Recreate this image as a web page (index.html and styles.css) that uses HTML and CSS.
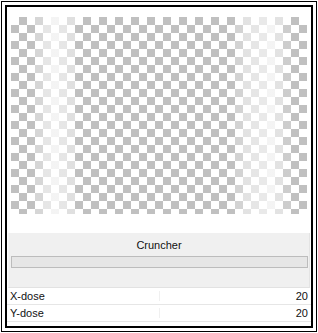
FILE: index.html
```html
<!DOCTYPE html>
<html lang="en">
  <head>
    <meta charset="UTF-8" />
    <title>Cruncher</title>
    <link rel="stylesheet" href="styles.css">
  </head>
  <body>
    <div class="frame">
      <div class="window">
        <div class="preview">
          <div class="checker"></div>
        </div>
        <div class="panel">
          <div class="panel-title">Cruncher</div>
          <div class="progress"></div>
        </div>
        <div class="params">
          <div class="row">
            <span class="name">X-dose</span>
            <span class="sep"></span>
            <span class="value">20</span>
          </div>
          <div class="row">
            <span class="name">Y-dose</span>
            <span class="sep"></span>
            <span class="value">20</span>
          </div>
        </div>
      </div>
    </div>
  </body>
</html>
```
FILE: styles.css
```css
body{
  margin: 0;
  background: #fff;
  font-family: "Liberation Sans", Arial, sans-serif;
  font-size: 11px;
  color: #111;
}
.frame{
  margin: 1px;
  width: 308px;
  height: 323px;
  padding: 3px;
  border: 1px solid #000;
}
.window{
  height: 319px;
  border: 2px solid #000;
  background: #fff;
  display: flex;
  flex-direction: column;
}
.preview{
  height: 226px;
  padding: 10px 0 0 4px;
  box-sizing: border-box;
}
/* checker with faded columns, one step per 8px column */
.checker{
  width: 296px;
  height: 197px;
  background-color: #fff;
  background-image:
    linear-gradient(to right,
      rgba(255,255,255,0) 24px,
      rgba(255,255,255,0.35) 24px 32px,
      rgba(255,255,255,0.6) 32px 40px,
      rgba(255,255,255,0.82) 40px 48px,
      rgba(255,255,255,0.6) 48px 56px,
      rgba(255,255,255,0.5) 56px 64px,
      rgba(255,255,255,0) 64px 224px,
      rgba(255,255,255,0.3) 224px 232px,
      rgba(255,255,255,0.55) 232px 240px,
      rgba(255,255,255,0.6) 240px 248px,
      rgba(255,255,255,0.65) 248px 256px,
      rgba(255,255,255,0.82) 256px 264px,
      rgba(255,255,255,0.55) 264px 272px,
      rgba(255,255,255,0.2) 272px 280px,
      rgba(255,255,255,0) 280px),
    conic-gradient(#c0c0c0 25%, #fff 0 50%, #c0c0c0 0 75%, #fff 0);
  background-size: auto, 16px 16px;
}
.panel{
  margin: 0 1px 0 1px;
  height: 54px;
  background: #f0f0f0;
  border-left: 1px solid #f6f6f6;
  border-right: 1px solid #e4e4e4;
  border-bottom: 1px solid #e2e2e2;
}
.panel-title{
  height: 21px;
  padding-top: 2px;
  line-height: 21px;
  text-align: center;
}
.progress{
  margin: 0 1px 0 2px;
  height: 10px;
  background: #e6e6e6;
  border: 1px solid #bcbcbc;
}
.row{
  display: flex;
  align-items: center;
  height: 16px;
  padding: 0 3px 0 3px;
  border-bottom: 1px solid #e6e6e6;
}
.name{
  flex: 1;
}
.sep{
  width: 1px;
  height: 10px;
  background: #f0f0f0;
}
.value{
  flex: 1;
  text-align: right;
}
```
